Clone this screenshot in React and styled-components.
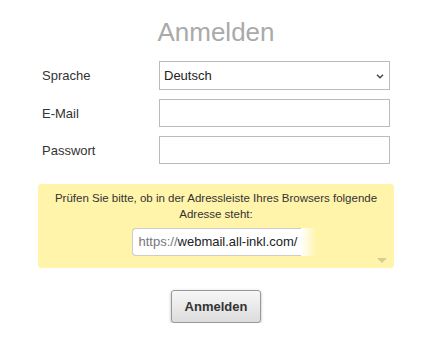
import styled, { createGlobalStyle } from "styled-components";

const GlobalStyle = createGlobalStyle`
    body {
        margin: 0;
        background: #fff;
        font-family: "Liberation Sans", Arial, sans-serif;
        color: #333;
    }
`;

const App = () => {
    return <Page>
        <GlobalStyle />
        <Title>Anmelden</Title>

        <Form>
            <Row>
                <Label>Sprache</Label>
                <SelectWrap>
                    <Select defaultValue="de">
                        <option value="de">Deutsch</option>
                        <option value="en">English</option>
                    </Select>
                    <Chevron width="8" height="5" viewBox="0 0 8 5">
                        <path d="M1 0.8 L4 3.8 L7 0.8" fill="none" stroke="#444" strokeWidth="1.4" />
                    </Chevron>
                </SelectWrap>
            </Row>
            <Row>
                <Label>E-Mail</Label>
                <Input type="text" />
            </Row>
            <Row>
                <Label>Passwort</Label>
                <Input type="password" />
            </Row>

            <Notice>
                <NoticeText>
                    Prüfen Sie bitte, ob in der Adressleiste Ihres Browsers folgende Adresse steht:
                </NoticeText>
                <UrlBox>
                    <Scheme>https://</Scheme>webmail.all-inkl.com/
                </UrlBox>
                <Arrow />
            </Notice>

            <ButtonRow>
                <Button>Anmelden</Button>
            </ButtonRow>
        </Form>
    </Page>
}

const Page = styled.div`
    width: 432px;
    padding-top: 17px;
`;

const Title = styled.h1`
    margin: 0;
    font-size: 26px;
    font-weight: normal;
    line-height: 30px;
    color: #aaa;
    text-align: center;
`;

const Form = styled.div`
    margin: 14px 38px 0;
    display: flex;
    flex-direction: column;
`;

const Row = styled.div`
    display: grid;
    grid-template-columns: 121px 231px;
    align-items: center;
    height: 28px;
    margin-bottom: 9px;

    &:first-child{
        height: 29px;
    }
`;

const Label = styled.label`
    padding-left: 4px;
    font-size: 13px;
    color: #333;
`;

const SelectWrap = styled.div`
    position: relative;
    height: 100%;
`;

const Select = styled.select`
    appearance: none;
    width: 100%;
    height: 100%;
    box-sizing: border-box;
    border: 1px solid #bbb;
    background: #fff;
    font-family: "Liberation Sans", Arial, sans-serif;
    font-size: 13px;
    color: #222;
    padding: 0 0 0 4px;
    margin: 0;
    outline: none;
`;

const Chevron = styled.svg`
    position: absolute;
    right: 6px;
    top: 13px;
    pointer-events: none;
`;

const Input = styled.input`
    width: 100%;
    height: 100%;
    box-sizing: border-box;
    border: 1px solid #bbb;
    background: #fff;
    margin: 0;
    outline: none;
`;

const Notice = styled.div`
    position: relative;
    margin-top: 11px;
    background: #fff4aa;
    border-radius: 3px;
    padding: 6px 6px 12px;
    text-align: center;
`;

const NoticeText = styled.div`
    font-size: 11.5px;
    line-height: 16px;
    color: #333;
`;

const UrlBox = styled.div`
    position: relative;
    display: inline-block;
    box-sizing: border-box;
    width: 169px;
    height: 28px;
    margin-top: 6px;
    padding-left: 6px;
    border: 1px solid #ccc;
    border-right: none;
    border-radius: 4px 0 0 4px;
    background: #fff;
    font-size: 13px;
    line-height: 26px;
    color: #222;
    text-align: left;
    white-space: nowrap;

    &::after{
        content: "";
        position: absolute;
        top: -1px;
        bottom: -1px;
        left: 100%;
        width: 16px;
        background: linear-gradient(to right, #fff, #fff4aa);
    }
`;

const Scheme = styled.span`
    color: #777;
`;

const Arrow = styled.span`
    position: absolute;
    right: 7px;
    bottom: 5px;
    width: 0;
    height: 0;
    border-left: 5px solid transparent;
    border-right: 5px solid transparent;
    border-top: 5px solid #d8cd8e;
`;

const ButtonRow = styled.div`
    display: flex;
    justify-content: center;
    margin-top: 22px;
`;

const Button = styled.button`
    width: 90px;
    height: 33px;
    border: 1px solid #999;
    border-radius: 3px;
    background: linear-gradient(to bottom, #f7f7f7, #dcdcdc);
    box-shadow: 0 1px 3px rgba(0, 0, 0, 0.3);
    font-family: "Liberation Sans", Arial, sans-serif;
    font-size: 13px;
    font-weight: bold;
    color: #333;
    cursor: pointer;
`;

export default App;
